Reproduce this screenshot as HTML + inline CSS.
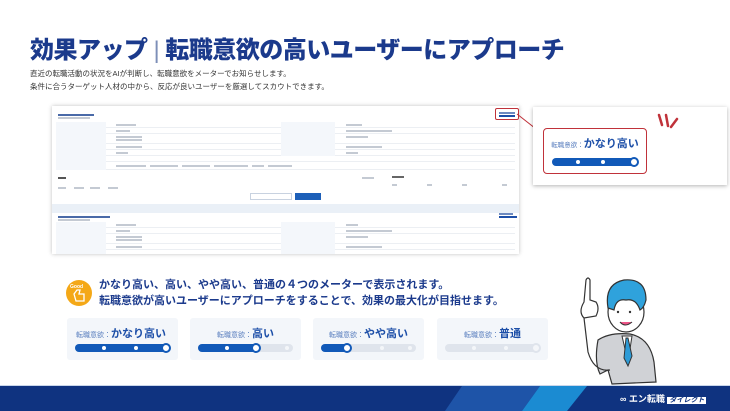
<!DOCTYPE html>
<html><head><meta charset="utf-8"><style>
*{margin:0;padding:0;box-sizing:border-box}
body{width:730px;height:411px;background:#fff;position:relative;overflow:hidden;font-family:"Liberation Sans","Noto Sans CJK JP",sans-serif}
.abs{position:absolute}
h1{position:absolute;left:30px;top:30px;font-size:24px;font-weight:900;color:#1b3a8c;letter-spacing:-0.5px;white-space:nowrap}
.sub{position:absolute;left:30px;font-size:7.5px;color:#333;white-space:nowrap}
.shot{left:52px;top:106px;width:467px;height:148px;background:#fff;box-shadow:0 0 4px rgba(0,0,0,.25);overflow:hidden}
.row{position:absolute;left:4px;right:4px;height:6px;border-bottom:1px solid #eceff3}
.lab{position:absolute;top:0;height:6px;background:#f4f7fb}
.t{position:absolute;height:1.5px;background:#c4cad3}
.card{background:#f3f6fa;border-radius:3px;height:42px;width:111px;top:318px}
.ml{position:absolute;top:7px;left:0;right:0;text-align:center;font-size:7px;color:#5a7fbf;white-space:nowrap}
.ml b{font-size:11px;color:#1d4fa8;font-weight:700}
.bar{position:absolute;left:8px;right:8px;top:26px;height:8px;border-radius:4px;background:#dfe4ec}
.fill{position:absolute;left:0;top:0;height:8px;border-radius:4px;background:#1159b8}
.dot{position:absolute;top:2px;width:4px;height:4px;border-radius:50%;background:#fff}
.knob{position:absolute;top:-1px;width:10px;height:10px;border-radius:50%;background:#fff;border:2.5px solid #1159b8}
</style></head><body>
<h1>効果アップ<span style="font-weight:300;color:#7d8fb8;margin:0 6px">|</span>転職意欲の高いユーザーにアプローチ</h1>
<div class="sub" style="top:68px">直近の転職活動の状況をAIが判断し、転職意欲をメーターでお知らせします。</div>
<div class="sub" style="top:81px">条件に合うターゲット人材の中から、反応が良いユーザーを厳選してスカウトできます。</div>

<div class="abs shot">
 <div class="t" style="left:6px;top:8px;width:36px;background:#4a6aa8"></div>
 <div class="t" style="left:6px;top:11px;width:32px"></div>
 <div class="abs" style="left:443px;top:2px;width:24px;height:12px;border:1.5px solid #c0323a;border-radius:2px"></div>
 <div class="t" style="left:447px;top:6px;width:16px;background:#6d8ac0"></div>
 <div class="t" style="left:447px;top:9px;width:16px;height:2px;background:#1d4fa8"></div>
 <div class="row" style="top:16px"><div class="lab" style="left:0;width:50px"></div><div class="lab" style="left:225px;width:54px"></div><div class="t" style="left:60px;top:2px;width:20px"></div><div class="t" style="left:290px;top:2px;width:16px"></div></div>
 <div class="row" style="top:22px"><div class="lab" style="left:0;width:50px"></div><div class="lab" style="left:225px;width:54px"></div><div class="t" style="left:60px;top:2px;width:14px"></div><div class="t" style="left:290px;top:2px;width:46px"></div></div>
 <div class="row" style="top:28px;height:10px"><div class="lab" style="left:0;width:50px;height:10px"></div><div class="lab" style="left:225px;width:54px;height:10px"></div><div class="t" style="left:60px;top:2px;width:26px"></div><div class="t" style="left:60px;top:5px;width:26px"></div><div class="t" style="left:290px;top:2px;width:22px"></div></div>
 <div class="row" style="top:38px"><div class="lab" style="left:0;width:50px"></div><div class="lab" style="left:225px;width:54px"></div><div class="t" style="left:60px;top:2px;width:26px"></div><div class="t" style="left:290px;top:2px;width:36px"></div></div>
 <div class="row" style="top:44px"><div class="lab" style="left:0;width:50px"></div><div class="lab" style="left:225px;width:54px"></div><div class="t" style="left:60px;top:2px;width:12px"></div><div class="t" style="left:290px;top:2px;width:12px"></div></div>
 <div class="row" style="top:50px"><div class="lab" style="left:0;width:50px"></div></div>
 <div class="row" style="top:56px;height:8px"><div class="lab" style="left:0;width:50px;height:8px"></div><div class="t" style="left:60px;top:3px;width:30px"></div><div class="t" style="left:94px;top:3px;width:28px"></div><div class="t" style="left:126px;top:3px;width:28px"></div><div class="t" style="left:158px;top:3px;width:34px"></div><div class="t" style="left:196px;top:3px;width:12px"></div><div class="t" style="left:212px;top:3px;width:24px"></div></div>
 <div class="t" style="left:6px;top:71px;width:8px;background:#555"></div>
 <div class="t" style="left:310px;top:71px;width:12px"></div>
 <div class="t" style="left:340px;top:70px;width:12px;background:#666"></div>
 <div class="t" style="left:340px;top:78px;width:5px"></div><div class="t" style="left:375px;top:78px;width:5px"></div><div class="t" style="left:410px;top:78px;width:5px"></div><div class="t" style="left:450px;top:78px;width:5px"></div>
 <div class="t" style="left:6px;top:81px;width:8px"></div><div class="t" style="left:22px;top:81px;width:10px"></div><div class="t" style="left:38px;top:81px;width:10px"></div><div class="t" style="left:56px;top:81px;width:10px"></div>
 <div class="abs" style="left:198px;top:87px;width:42px;height:7px;border:1px solid #c8d2e0;background:#fff"></div>
 <div class="abs" style="left:243px;top:87px;width:26px;height:7px;background:#1d5fb8"></div>
 <div class="abs" style="left:0;top:98px;width:467px;height:9px;background:#eaf0f7"></div>
 <div class="t" style="left:6px;top:110px;width:52px;background:#4a6aa8"></div>
 <div class="t" style="left:6px;top:113px;width:32px"></div>
 <div class="t" style="left:447px;top:107px;width:14px;background:#6d8ac0"></div>
 <div class="t" style="left:447px;top:110px;width:18px;height:2px;background:#1d4fa8"></div>
 <div class="row" style="top:116px"><div class="lab" style="left:0;width:50px"></div><div class="lab" style="left:225px;width:54px"></div><div class="t" style="left:60px;top:2px;width:20px"></div><div class="t" style="left:290px;top:2px;width:12px"></div></div>
 <div class="row" style="top:122px"><div class="lab" style="left:0;width:50px"></div><div class="lab" style="left:225px;width:54px"></div><div class="t" style="left:60px;top:2px;width:14px"></div><div class="t" style="left:290px;top:2px;width:46px"></div></div>
 <div class="row" style="top:128px;height:10px"><div class="lab" style="left:0;width:50px;height:10px"></div><div class="lab" style="left:225px;width:54px;height:10px"></div><div class="t" style="left:60px;top:2px;width:26px"></div><div class="t" style="left:60px;top:5px;width:26px"></div><div class="t" style="left:290px;top:2px;width:22px"></div></div>
 <div class="row" style="top:138px"><div class="lab" style="left:0;width:50px"></div><div class="lab" style="left:225px;width:54px"></div><div class="t" style="left:60px;top:2px;width:26px"></div><div class="t" style="left:290px;top:2px;width:36px"></div></div>
 <div class="row" style="top:144px"><div class="lab" style="left:0;width:50px"></div><div class="lab" style="left:225px;width:54px"></div></div>
</div>
<svg class="abs" style="left:515px;top:110px" width="40" height="30"><path d="M2 4 L30 26" stroke="#c0323a" stroke-width="1" fill="none"/></svg>

<div class="abs" style="left:533px;top:107px;width:194px;height:78px;background:#fff;box-shadow:0 1px 4px rgba(0,0,0,.3)">
 <div class="abs" style="left:10px;top:21px;height:46px;border:1.5px solid #c0323a;border-radius:4px;width:104px"></div>
 <div class="abs" style="left:10px;top:21px;width:104px;height:46px">
  <div class="ml" style="top:7px;font-size:6.5px">転職意欲：<b>かなり高い</b></div>
  <div class="bar" style="top:30px;left:9px;right:9px"><div class="fill" style="width:100%"></div><div class="dot" style="left:28%"></div><div class="dot" style="left:57%"></div><div class="knob" style="right:-1px"></div></div>
 </div>
 <svg class="abs" style="left:122px;top:6px" width="26" height="20"><path d="M4 2 L7 12 M11 2 L13 13 M22 6 L16 14" stroke="#c0323a" stroke-width="2.5" stroke-linecap="round"/></svg>
</div>

<div class="abs" style="left:66px;top:280px;width:26px;height:26px;border-radius:50%;background:#f4a817"></div>
<div class="abs" style="left:70px;top:284px;font-size:5px;color:#fff;font-weight:700">Good</div>
<svg class="abs" style="left:72px;top:289px" width="14" height="13"><path d="M2 5 L4 12 L12 12 L12 5 L7 5 L8 1 L5 1 Z" fill="none" stroke="#fff" stroke-width="1.3"/></svg>
<div class="abs" style="left:99px;top:277px;font-size:11px;font-weight:700;color:#1b3a8c;line-height:16px;white-space:nowrap">かなり高い、高い、やや高い、普通の４つのメーターで表示されます。<br>転職意欲が高いユーザーにアプローチをすることで、効果の最大化が目指せます。</div>

<div class="abs card" style="left:67px"><div class="ml" style="text-align:left;left:9px">転職意欲：<b>かなり高い</b></div><div class="bar"><div class="fill" style="width:100%"></div><div class="dot" style="left:28%"></div><div class="dot" style="left:62%"></div><div class="knob" style="right:-1px"></div></div></div>
<div class="abs card" style="left:190px"><div class="ml">転職意欲：<b>高い</b></div><div class="bar"><div class="fill" style="width:62%"></div><div class="dot" style="left:28%"></div><div class="knob" style="left:56%"></div><div class="dot" style="right:4px;background:#f4f6f9"></div></div></div>
<div class="abs card" style="left:313px"><div class="ml">転職意欲：<b>やや高い</b></div><div class="bar"><div class="fill" style="width:30%"></div><div class="knob" style="left:22%"></div><div class="dot" style="left:62%;background:#f4f6f9"></div><div class="dot" style="right:4px;background:#f4f6f9"></div></div></div>
<div class="abs card" style="left:437px"><div class="ml">転職意欲：<b>普通</b></div><div class="bar"><div class="dot" style="left:28%;background:#f4f6f9"></div><div class="dot" style="left:62%;background:#f4f6f9"></div><div class="knob" style="right:-1px;border-color:#dfe4ec;background:#f4f6f9"></div></div></div>

<svg class="abs" style="left:570px;top:262px" width="90" height="125" viewBox="0 0 90 125">
 <path d="M28 78 Q40 70 60 72 Q80 76 84 100 L86 120 L42 122 L38 108 L30 112 Q24 100 28 78Z" fill="#d0d2d6" stroke="#333" stroke-width="1.2"/>
 <path d="M52 74 L58 100 L62 74 Z" fill="#fff" stroke="#333" stroke-width="1"/>
 <path d="M56 76 L54 96 L58 104 L62 94 L58 76Z" fill="#2e9bd6" stroke="#333" stroke-width="1"/>
 <ellipse cx="56" cy="50" rx="18" ry="20" fill="#fff" stroke="#333" stroke-width="1.2"/>
 <path d="M38 46 Q34 22 54 18 Q76 16 76 38 Q74 46 70 48 Q66 36 56 38 Q46 36 44 48 Z" fill="#2fa2dc" stroke="#333" stroke-width="1.2"/>
 <path d="M50 60 Q55 66 62 60" fill="#e58" stroke="#333" stroke-width="1"/>
 <circle cx="48" cy="50" r="1.2" fill="#333"/><circle cx="60" cy="50" r="1.2" fill="#333"/>
 <path d="M14 40 L16 18 Q18 14 20 18 L20 38 L26 40 Q30 46 26 54 L14 56 Q8 50 14 40Z" fill="#fff" stroke="#333" stroke-width="1.2"/>
 <path d="M14 56 L18 90 Q24 110 40 108" fill="none" stroke="#333" stroke-width="1.2"/>
</svg>

<div class="abs" style="left:0;top:386px;width:730px;height:25px;background:#0f3380"></div>
<div class="abs" style="left:0;top:385px;width:730px;height:1px;background:#c9d6ea"></div>
<svg class="abs" style="left:0;top:386px" width="730" height="25"><polygon points="462,0 540,0 522,25 445,25" fill="#1e54a8"/><polygon points="540,0 587,0 567,25 522,25" fill="#1b8bd2"/></svg>
<div class="abs" style="left:620px;top:392px;font-size:9px;font-weight:700;color:#fff;white-space:nowrap">∞ エン転職 <span style="background:#fff;color:#0f3380;font-size:7px;padding:0 2px;font-style:italic">ダイレクト</span></div>
</body></html>
